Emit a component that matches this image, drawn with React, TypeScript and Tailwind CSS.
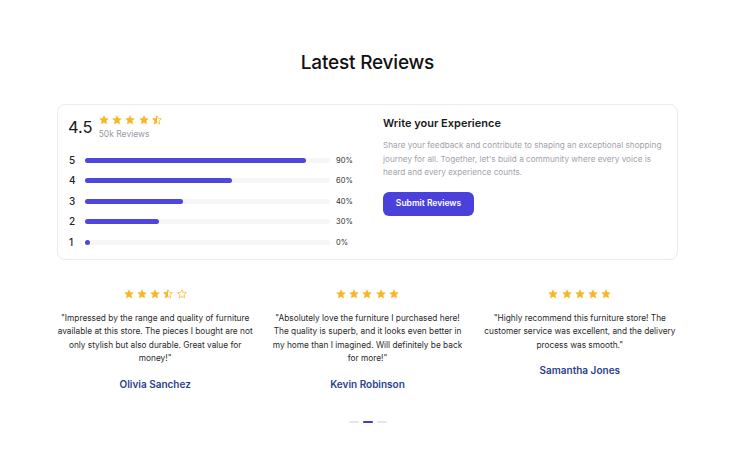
import { useId } from 'react';

type StarKind = 'full' | 'half' | 'empty';

const STAR_POINTS =
  '12,1.5 15.1,8.2 22.5,9 17,14 18.5,21.5 12,17.8 5.5,21.5 7,14 1.5,9 8.9,8.2';

function Star({ kind, size = 10 }: { kind: StarKind; size?: number }) {
  const id = useId();
  return (
    <svg width={size} height={size} viewBox="0 0 24 24" className="shrink-0">
      {kind === 'full' && (
        <polygon points={STAR_POINTS} fill="#f6b626" stroke="#f6b626" strokeWidth={1} strokeLinejoin="round" />
      )}
      {kind === 'empty' && (
        <polygon points={STAR_POINTS} fill="none" stroke="#f6b626" strokeWidth={1.8} strokeLinejoin="round" />
      )}
      {kind === 'half' && (
        <>
          <defs>
            <clipPath id={id}>
              <rect x="0" y="0" width="12" height="24" />
            </clipPath>
          </defs>
          <polygon points={STAR_POINTS} fill="none" stroke="#f6b626" strokeWidth={1.8} strokeLinejoin="round" />
          <polygon points={STAR_POINTS} fill="#f6b626" clipPath={`url(#${id})`} />
        </>
      )}
    </svg>
  );
}

function Stars({ rating, size = 10, gap = 'gap-[3px]' }: { rating: number; size?: number; gap?: string }) {
  return (
    <div className={`flex items-center ${gap}`}>
      {[1, 2, 3, 4, 5].map((i) => {
        const kind: StarKind = rating >= i ? 'full' : rating >= i - 0.5 ? 'half' : 'empty';
        return <Star key={i} kind={kind} size={size} />;
      })}
    </div>
  );
}

const bars = [
  { label: '5', pct: 90 },
  { label: '4', pct: 60 },
  { label: '3', pct: 40 },
  { label: '2', pct: 30 },
  { label: '1', pct: 0 },
];

const reviews = [
  {
    rating: 3.5,
    text: '"Impressed by the range and quality of furniture available at this store. The pieces I bought are not only stylish but also durable. Great value for money!"',
    name: 'Olivia Sanchez',
  },
  {
    rating: 5,
    text: '"Absolutely love the furniture I purchased here! The quality is superb, and it looks even better in my home than I imagined. Will definitely be back for more!"',
    name: 'Kevin Robinson',
  },
  {
    rating: 5,
    text: '"Highly recommend this furniture store! The customer service was excellent, and the delivery process was smooth."',
    name: 'Samantha Jones',
  },
];

export default function App() {
  return (
    <div className="min-h-screen bg-white font-['Inter',sans-serif] text-[#111827]">
      <div className="mx-auto w-[621px] pt-[51px]">
        <h1 className="text-center text-[19px] leading-6 font-medium tracking-[-0.2px] text-[#111111]">
          Latest Reviews
        </h1>

        {/* Summary card */}
        <div className="mt-[29px] grid grid-cols-[284px_1fr] gap-[31px] rounded-lg border border-[#ececef] px-[10px] pt-[9px] pb-[6px]">
          <div>
            <div className="flex items-center gap-[6px]">
              <span className="text-[16.5px] leading-6 font-normal text-[#1a1a1a]">4.5</span>
              <div className="flex flex-col gap-[4px] pt-[1px]">
                <Stars rating={4.5} size={10} gap="gap-[3.3px]" />
                <span className="text-[8.5px] leading-[11px] text-[#9a9aa3]">50k Reviews</span>
              </div>
            </div>

            <div className="mt-[10px] flex flex-col">
              {bars.map((b) => (
                <div key={b.label} className="flex h-[20.5px] items-center">
                  <span className="w-[17px] pl-[1px] text-[10px] font-medium text-[#222]">{b.label}</span>
                  <div className="relative h-[5px] flex-1 rounded-full bg-[#f6f6f8]">
                    <div
                      className="absolute top-0 left-0 h-[5px] min-w-[5px] rounded-full bg-[#4f46dc]"
                      style={{ width: `${b.pct}%` }}
                    />
                  </div>
                  <span className="w-[22px] pl-[6px] text-[7.5px] text-[#333]">{b.pct}%</span>
                </div>
              ))}
            </div>
          </div>

          <div className="pt-[2px]">
            <h2 className="text-[11px] leading-[14px] font-semibold text-[#1a1a1a]">Write your Experience</h2>
            <p className="mt-[9px] text-[8.2px] leading-[13.5px] text-[#a3a3ab]">
              Share your feedback and contribute to shaping an exceptional shopping journey for all. Together, let's
              build a community where every voice is heard and every experience counts.
            </p>
            <button className="mt-[12px] h-6 w-[91px] rounded-md bg-[#4a40dc] text-[8.5px] font-semibold text-white">
              Submit Reviews
            </button>
          </div>
        </div>

        {/* Testimonials */}
        <div className="mt-[29px] grid grid-cols-3 gap-4">
          {reviews.map((r) => (
            <div key={r.name} className="flex flex-col items-center text-center">
              <Stars rating={r.rating} size={10} gap="gap-[3.3px]" />
              <p className="mt-[13px] text-[8.3px] leading-[13.5px] text-[#2a2a2a]">{r.text}</p>
              <span className="mt-[11px] text-[10px] leading-[14px] font-semibold text-[#2b3f8f]">{r.name}</span>
            </div>
          ))}
        </div>

        <div className="mt-[30px] flex justify-center gap-[4px]">
          <span className="h-[2px] w-[10px] rounded-full bg-[#e5e5ea]" />
          <span className="h-[2px] w-[10px] rounded-full bg-[#4338ca]" />
          <span className="h-[2px] w-[10px] rounded-full bg-[#e5e5ea]" />
        </div>
      </div>
    </div>
  );
}
